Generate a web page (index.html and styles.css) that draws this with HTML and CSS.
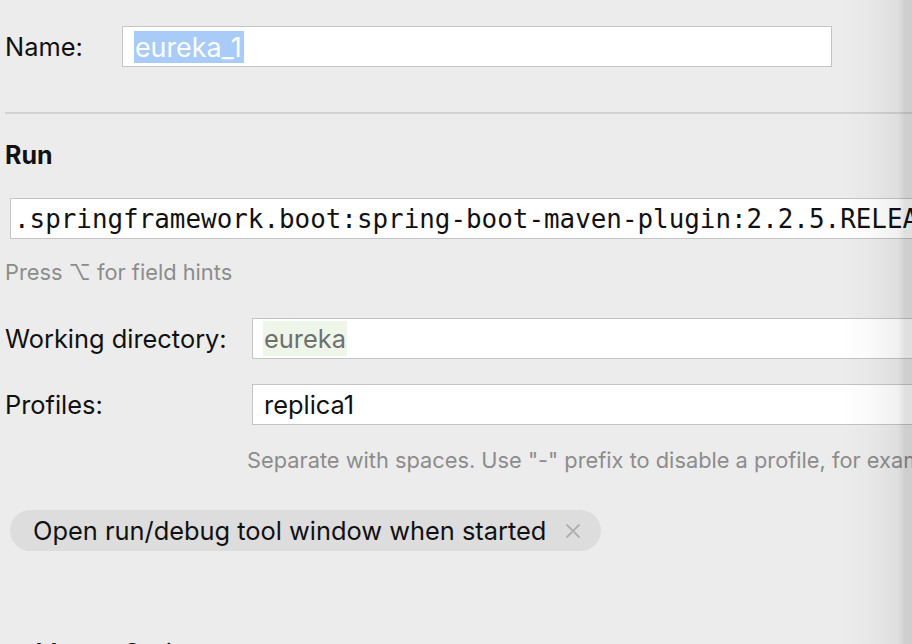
FILE: index.html
```html
<!DOCTYPE html>
<html>
<head>
<meta charset="utf-8">
<link rel="stylesheet" href="styles.css">
</head>
<body>
<div class="page">
  <div class="row row-name">
    <label class="label label-name">Name:</label>
    <div class="field field-name"><span class="selected">eureka_1</span></div>
  </div>
  <div class="separator"></div>
  <div class="section-title">Run</div>
  <div class="field field-cmd"><span class="mono">.springframework.boot:spring-boot-maven-plugin:2.2.5.RELEASE:run</span></div>
  <div class="hint hint-press">Press ⌥ for field hints</div>
  <div class="row row-wd">
    <label class="label label-wide">Working directory:</label>
    <div class="field field-wide"><span class="macro">eureka</span></div>
  </div>
  <div class="row row-profiles">
    <label class="label label-wide">Profiles:</label>
    <div class="field field-wide"><span class="value">replica1</span></div>
  </div>
  <div class="hint hint-profiles">Separate with spaces. Use "-" prefix to disable a profile, for example: -dev</div>
  <div class="chip">
    <span class="chip-text">Open run/debug tool window when started</span>
    <svg class="chip-close" width="16" height="16" viewBox="0 0 16 16"><path d="M1.5 1.5 L14.5 14.5 M14.5 1.5 L1.5 14.5" stroke="#b0b0b0" stroke-width="1.8" fill="none"/></svg>
  </div>
  <div class="subsection">Maven Options</div>
</div>
<div class="edge-shadow"></div>
</body>
</html>
```
FILE: styles.css
```css
html, body {
  margin: 0;
  padding: 0;
  width: 912px;
  height: 644px;
  overflow: hidden;
  background: #ececec;
}
body {
  font-family: Inter, "Noto Sans", sans-serif;
  color: #111;
  position: relative;
}
.page {
  padding: 26px 0 0 5px;
  display: flex;
  flex-direction: column;
  width: 1100px;
}
.row {
  display: flex;
  align-items: center;
}
.label {
  font-size: 25.4px;
  line-height: 30px;
  color: #111;
}
.label-name {
  width: 117px;
}
.label-wide {
  width: 247px;
}
.field {
  box-sizing: border-box;
  height: 41px;
  background: #fff;
  border: 1px solid #c4c4c4;
  display: flex;
  align-items: center;
  font-size: 25.4px;
}
.field-name {
  width: 710px;
  padding-left: 11px;
}
.selected {
  background: #a9cbf8;
  color: #fff;
  padding: 0 2px 0 1px;
  line-height: 32px;
  font-size: 26.8px;
}
.separator {
  height: 2px;
  background: #d2d2d2;
  margin-top: 45px;
}
.section-title {
  font-weight: 700;
  font-size: 25px;
  margin-top: 26px;
  line-height: 30px;
}
.field-cmd {
  margin-top: 28px;
  margin-left: 5px;
  width: 1000px;
  padding-left: 3px;
}
.mono {
  font-family: "DejaVu Sans Mono", monospace;
  font-size: 25.9px;
  white-space: nowrap;
  color: #111;
}
.hint {
  color: #8c8c8c;
  font-size: 21.8px;
}
.hint-press {
  margin-top: 20px;
  line-height: 26px;
}
.row-wd {
  margin-top: 33px;
}
.row-profiles {
  margin-top: 25px;
}
.macro {
  margin-left: 10px;
  background: #eef5e9;
  color: #6f6f6f;
  line-height: 35px;
  padding: 0 1px;
}
.value {
  margin-left: 11px;
}
.field-wide {
  width: 760px;
}
.hint-profiles {
  margin-left: 242px;
  margin-top: 22px;
  white-space: nowrap;
  line-height: 26px;
}
.chip {
  margin-top: 37px;
  margin-left: 5px;
  align-self: flex-start;
  height: 41px;
  box-sizing: border-box;
  background: #dddddd;
  border-radius: 21px;
  display: flex;
  align-items: center;
  padding: 0 20px 0 23px;
  font-size: 25.4px;
}
.chip-close {
  margin-left: 19px;
}
.subsection {
  margin-top: 87px;
  margin-left: 30px;
  font-size: 25.4px;
  line-height: 30px;
}
.edge-shadow {
  position: absolute;
  top: 0;
  right: 0;
  width: 70px;
  height: 644px;
  background: linear-gradient(to right, rgba(0,0,0,0) 0%, rgba(0,0,0,0.02) 40%, rgba(0,0,0,0.06) 80%, rgba(0,0,0,0.12) 90%, rgba(0,0,0,0.13) 100%);
  pointer-events: none;
}
```
